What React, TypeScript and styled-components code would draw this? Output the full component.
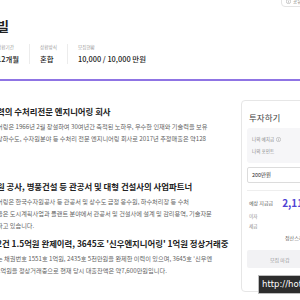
import React from "react";
import styled, { createGlobalStyle } from "styled-components";

const Global = createGlobalStyle`
  html, body { margin: 0; padding: 0; background: #ffffff; }
  body {
    width: 300px; height: 300px; overflow: hidden;
    font-family: "Noto Sans CJK KR", "Noto Sans", sans-serif;
    color: #222;
  }
`;

const Page = styled.div`
  width: 360px;
  margin-left: -3px;
  position: relative;
`;

const Header = styled.header`
  padding-top: 18px;
  border-bottom: 2px solid #8f74e4;
`;

const Title = styled.h1`
  margin: 0;
  font-size: 13px;
  line-height: 16px;
  font-weight: 700;
  color: #222;
  white-space: nowrap;
`;

const InfoRow = styled.div`
  display: flex;
  align-items: stretch;
  margin-top: 10px;
  padding-bottom: 15px;
`;

const InfoItem = styled.div<{ $first?: boolean }>`
  display: flex;
  flex-direction: column;
  gap: 3px;
  padding: 0 10px;
  padding-left: ${(p) => (p.$first ? "0" : "10px")};
  border-left: ${(p) => (p.$first ? "none" : "1px solid #ececec")};
`;

const InfoLabel = styled.span`
  font-size: 4.6px;
  line-height: 7px;
  color: #9a9a9a;
  white-space: nowrap;
`;

const InfoValue = styled.span`
  font-size: 7.4px;
  line-height: 10px;
  font-weight: 500;
  color: #222;
  white-space: nowrap;
`;

const ShareButton = styled.div`
  position: absolute;
  top: -5px;
  left: 284px;
  display: flex;
  align-items: center;
  gap: 2px;
  padding: 2px 4px;
  border: 1px solid #e3e3e3;
  border-radius: 4px;
  font-size: 4.5px;
  color: #777;
  background: #fff;
`;

const Body = styled.div`
  display: flex;
  gap: 9px;
  margin-top: 19px;
`;

const Main = styled.main`
  width: 235px;
  flex: none;
  padding-top: 5px;
`;

const Section = styled.section<{ $gap: number }>`
  margin-bottom: ${(p) => p.$gap}px;
`;

const Heading = styled.h2`
  margin: 0 0 4px;
  font-size: 8.4px;
  line-height: 12px;
  font-weight: 700;
  color: #222;
  white-space: nowrap;
`;

const Line = styled.p`
  margin: 0;
  font-size: 6.2px;
  line-height: 12px;
  color: #5f5f5f;
  white-space: nowrap;
`;

const Card = styled.aside`
  width: 100px;
  height: 192px;
  box-sizing: border-box;
  border: 1px solid #e6e6e6;
  border-radius: 4px;
  padding: 10px 5px 0;
  display: flex;
  flex-direction: column;
`;

const CardTitle = styled.div`
  font-size: 8.5px;
  line-height: 12px;
  color: #444;
  padding-left: 2px;
`;

const WalletBox = styled.div`
  margin-top: 5px;
  background: #f6f6f8;
  border-radius: 3px;
  height: 35px;
  padding: 5px 5px;
  box-sizing: border-box;
  display: flex;
  flex-direction: column;
  justify-content: space-around;
`;

const Tiny = styled.span`
  font-size: 4.6px;
  line-height: 7px;
  color: #888;
  display: flex;
  align-items: center;
  gap: 2px;
`;

const Input = styled.div`
  margin-top: 4px;
  height: 16px;
  border: 1px solid #dcdcdc;
  border-radius: 2px;
  box-sizing: border-box;
  padding: 0 4px;
  display: flex;
  align-items: center;
  font-size: 5.4px;
  color: #333;
`;

const Divider = styled.div`
  margin-top: 7px;
  border-top: 1px solid #eeeeee;
`;

const PayRow = styled.div`
  margin-top: 4px;
  display: flex;
  align-items: center;
  gap: 9px;
  padding-left: 2px;
`;

const PayLabel = styled.span`
  font-size: 5px;
  color: #555;
`;

const PayValue = styled.span`
  font-size: 10px;
  font-weight: 700;
  color: #4f43d4;
`;

const SmallRows = styled.div`
  display: flex;
  flex-direction: column;
  gap: 3px;
  padding-left: 2px;
  margin-top: 3px;
`;

const Schedule = styled.div`
  margin-top: 4px;
  padding-left: 38px;
  font-size: 5px;
  color: #555;
`;

const ClosedButton = styled.div`
  margin-top: 9px;
  height: 18px;
  background: #f2f2f4;
  border-radius: 2px;
  display: flex;
  align-items: center;
  padding-left: 23px;
  font-size: 5px;
  color: #999;
`;

const StatusTip = styled.div`
  position: absolute;
  left: 261px;
  top: 275px;
  height: 17px;
  padding: 0 3px;
  background: #2d2d2d;
  border: 1px solid #bdbdbd;
  color: #fff;
  font-family: "DejaVu Sans", sans-serif;
  font-size: 8.5px;
  line-height: 17px;
  white-space: nowrap;
`;

const InfoIcon = () => (
  <svg width="5" height="5" viewBox="0 0 10 10">
    <circle cx="5" cy="5" r="4.3" fill="none" stroke="#999" strokeWidth="1" />
    <rect x="4.5" y="4" width="1" height="3.5" fill="#999" />
    <rect x="4.5" y="2.3" width="1" height="1" fill="#999" />
  </svg>
);

export default function App() {
  return (
    <>
      <Global />
      <Page>
        <ShareButton>
          <InfoIcon />
          공유
        </ShareButton>
        <Header>
          <Title>빌</Title>
          <InfoRow>
            <InfoItem $first>
              <InfoLabel>상환기간</InfoLabel>
              <InfoValue>12개월</InfoValue>
            </InfoItem>
            <InfoItem>
              <InfoLabel>상환방식</InfoLabel>
              <InfoValue>혼합</InfoValue>
            </InfoItem>
            <InfoItem>
              <InfoLabel>모집현황</InfoLabel>
              <InfoValue>10,000 / 10,000 만원</InfoValue>
            </InfoItem>
          </InfoRow>
        </Header>
        <Body>
          <Main>
            <Section $gap={35}>
              <Heading>력의 수처리전문 엔지니어링 회사</Heading>
              <Line>어링은 1966년 2월 창설하여 30여년간 축적된 노하우, 우수한 인재와 기술력을 보유</Line>
              <Line>상하수도, 수자원분야 등 수처리 전문 엔지니어링 회사로 2017년 추정매출은 약128</Line>
            </Section>
            <Section $gap={5}>
              <Heading>원 공사, 병풍건설 등 관공서 및 대형 건설사의 사업파트너</Heading>
              <Line>어링은 한국수자원공사 등 관공서 및 상수도 급정 응수원, 하수처리장 등 수처</Line>
              <Line>을은 도시계획사업과 플랜트 분야에서 관공서 및 건설사에 설계 및 감리용역, 기술자문</Line>
              <Line>하고 있습니다.</Line>
            </Section>
            <Section $gap={0}>
              <Heading>2건 1.5억원 완제이력, 3645호 '신우엔지니어링' 1억원 정상거래중</Heading>
              <Line>는 채권번호 1551호 1억원, 2435호 5천만원을 완제한 이력이 있으며, 3645호 '신우엔</Line>
              <Line>1억원을 정상거래중으로 현재 당시 대출잔액은 약7,600만원입니다.</Line>
            </Section>
          </Main>
          <Card>
            <CardTitle>투자하기</CardTitle>
            <WalletBox>
              <Tiny>
                나의 예치금 <InfoIcon />
              </Tiny>
              <Tiny>나의 포인트</Tiny>
            </WalletBox>
            <Input>200만원</Input>
            <Divider />
            <PayRow>
              <PayLabel>예상 지급금</PayLabel>
              <PayValue>2,112</PayValue>
            </PayRow>
            <SmallRows>
              <Tiny>이자</Tiny>
              <Tiny>세금</Tiny>
            </SmallRows>
            <Schedule>정산스케줄</Schedule>
            <ClosedButton>모집 마감</ClosedButton>
          </Card>
        </Body>
        <StatusTip>http://hoth</StatusTip>
      </Page>
    </>
  );
}
